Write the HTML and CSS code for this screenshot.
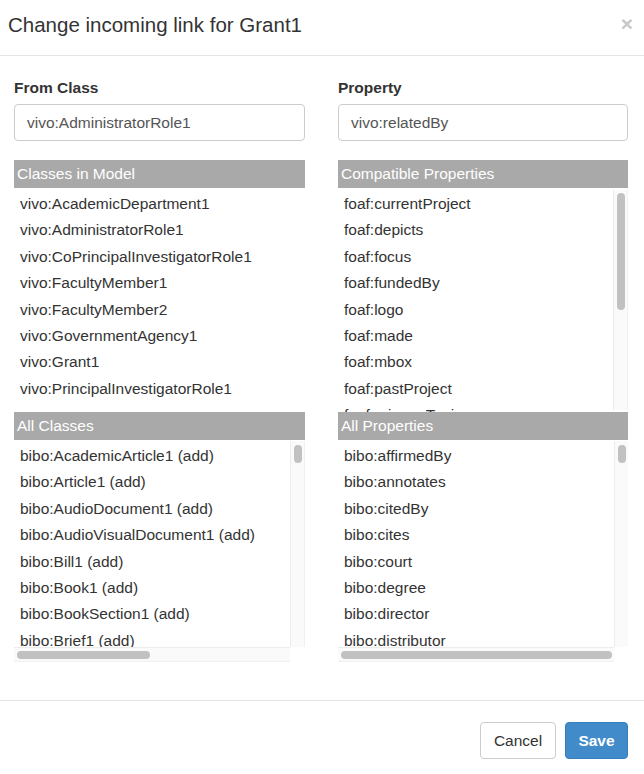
FILE: index.html
```html
<!DOCTYPE html>
<html>
<head>
<meta charset="utf-8">
<title>Change incoming link for Grant1</title>
<link rel="stylesheet" href="styles.css">
</head>
<body>
<div class="modal">
  <div class="modal-header">
    <h4 class="modal-title">Change incoming link for Grant1</h4>
    <button class="close" type="button">×</button>
  </div>
  <div class="modal-body">
    <div class="col">
      <label class="field-label">From Class</label>
      <div class="input">vivo:AdministratorRole1</div>
      <div class="list-head">Classes in Model</div>
      <div class="listbox listbox-plain">
        <ul class="items">
          <li>vivo:AcademicDepartment1</li>
          <li>vivo:AdministratorRole1</li>
          <li>vivo:CoPrincipalInvestigatorRole1</li>
          <li>vivo:FacultyMember1</li>
          <li>vivo:FacultyMember2</li>
          <li>vivo:GovernmentAgency1</li>
          <li>vivo:Grant1</li>
          <li>vivo:PrincipalInvestigatorRole1</li>
        </ul>
      </div>
      <div class="list-head">All Classes</div>
      <div class="listbox listbox-scroll">
        <ul class="items">
          <li>bibo:AcademicArticle1 (add)</li>
          <li>bibo:Article1 (add)</li>
          <li>bibo:AudioDocument1 (add)</li>
          <li>bibo:AudioVisualDocument1 (add)</li>
          <li>bibo:Bill1 (add)</li>
          <li>bibo:Book1 (add)</li>
          <li>bibo:BookSection1 (add)</li>
          <li>bibo:Brief1 (add)</li>
          <li>bibo:CaseBrief1 (add)</li>
        </ul>
        <div class="vtrack"><div class="vthumb vthumb-small"></div></div>
        <div class="htrack"><div class="hthumb hthumb-left"></div></div>
        <div class="corner"></div>
      </div>
    </div>
    <div class="col">
      <label class="field-label">Property</label>
      <div class="input">vivo:relatedBy</div>
      <div class="list-head">Compatible Properties</div>
      <div class="listbox listbox-vonly">
        <ul class="items">
          <li>foaf:currentProject</li>
          <li>foaf:depicts</li>
          <li>foaf:focus</li>
          <li>foaf:fundedBy</li>
          <li>foaf:logo</li>
          <li>foaf:made</li>
          <li>foaf:mbox</li>
          <li>foaf:pastProject</li>
          <li>foaf:primaryTopic</li>
          <li>foaf:publications</li>
        </ul>
        <div class="vtrack vtrack-tall"><div class="vthumb vthumb-large"></div></div>
      </div>
      <div class="list-head">All Properties</div>
      <div class="listbox listbox-scroll">
        <ul class="items">
          <li>bibo:affirmedBy</li>
          <li>bibo:annotates</li>
          <li>bibo:citedBy</li>
          <li>bibo:cites</li>
          <li>bibo:court</li>
          <li>bibo:degree</li>
          <li>bibo:director</li>
          <li>bibo:distributor</li>
          <li>bibo:editor</li>
        </ul>
        <div class="vtrack"><div class="vthumb vthumb-small"></div></div>
        <div class="htrack"><div class="hthumb hthumb-wide"></div></div>
        <div class="corner"></div>
      </div>
    </div>
  </div>
  <div class="modal-footer">
    <button class="btn btn-default" type="button">Cancel</button>
    <button class="btn btn-primary" type="button">Save</button>
  </div>
</div>
</body>
</html>
```

FILE: styles.css
```css
* { box-sizing: border-box; }

html, body {
  margin: 0;
  padding: 0;
  background: #ffffff;
}

body {
  font-family: "Liberation Sans", Arial, sans-serif;
  color: #333333;
  font-size: 15.5px;
}

.modal {
  width: 644px;
  height: 774px;
  display: flex;
  flex-direction: column;
}

.modal-header {
  height: 56px;
  border-bottom: 1px solid #e5e5e5;
  display: flex;
  align-items: center;
  justify-content: space-between;
  padding: 0 11px 5px 8px;
}

.modal-title {
  margin: 0;
  font-size: 20.5px;
  font-weight: normal;
  color: #333333;
  line-height: 24px;
}

.close {
  border: 0;
  background: transparent;
  padding: 0;
  margin: 0 0 3px 0;
  font-family: "Liberation Sans", Arial, sans-serif;
  font-size: 21px;
  font-weight: bold;
  line-height: 1;
  color: #c8c8c8;
}

.modal-body {
  display: grid;
  grid-template-columns: 291px 290px;
  column-gap: 33px;
  padding: 22px 16px 38px 14px;
}

.col {
  display: flex;
  flex-direction: column;
}

.field-label {
  display: block;
  font-weight: bold;
  font-size: 15.5px;
  line-height: 20px;
  color: #333333;
  margin-bottom: 6px;
}

.input {
  height: 37px;
  border: 1px solid #cccccc;
  border-radius: 4px;
  padding: 0 12px;
  display: flex;
  align-items: center;
  font-size: 15.5px;
  color: #555555;
  margin-bottom: 19px;
}

.list-head {
  height: 28px;
  background: #a9a9a9;
  color: #ffffff;
  font-size: 15.5px;
  line-height: 28px;
  padding-left: 3px;
}

.listbox {
  display: grid;
  overflow: hidden;
}

.listbox-plain {
  height: 224px;
  grid-template-columns: 1fr;
}

.listbox-vonly {
  height: 224px;
  grid-template-columns: 1fr 15px;
}

.listbox-scroll {
  height: 222px;
  grid-template-columns: 1fr 15px;
  grid-template-rows: 1fr 15px;
}

.items {
  list-style: none;
  margin: 0;
  padding: 3px 0 0 6px;
  overflow: hidden;
  white-space: nowrap;
  min-height: 0;
}

.items li {
  height: 26.4px;
  line-height: 26.4px;
  font-size: 15.5px;
  color: #333333;
}

.vtrack {
  background: #fafafa;
  border-left: 1px solid #ececec;
  border-right: 1px solid #f0f0f0;
  padding: 4px 0 0 3px;
  margin-top: 1px;
}

.vtrack-tall {
  margin: 2px 0;
  padding-top: 3px;
}

.vthumb {
  width: 8px;
  background: #c1c1c1;
  border-radius: 4px;
}

.vthumb-small { height: 18px; }
.vthumb-large { height: 117px; }

.htrack {
  background: #fafafa;
  border-top: 1px solid #ececec;
  border-bottom: 1px solid #f0f0f0;
  padding: 3px 2px 0 3px;
}

.hthumb {
  height: 8px;
  background: #c1c1c1;
  border-radius: 4px;
}

.hthumb-left { width: 133px; }
.hthumb-wide { width: 271px; }

.corner {
  background: #ffffff;
}

.modal-footer {
  margin-top: auto;
  border-top: 1px solid #e5e5e5;
  display: flex;
  justify-content: flex-end;
  align-items: flex-start;
  gap: 9px;
  padding: 21px 16px 15px 15px;
}

.btn {
  height: 37px;
  border-radius: 4px;
  font-family: "Liberation Sans", Arial, sans-serif;
  font-size: 15.5px;
  line-height: 35px;
  padding: 0;
  margin: 0;
  cursor: pointer;
}

.btn-default {
  background: #ffffff;
  border: 1px solid #cccccc;
  color: #333333;
  width: 76px;
}

.btn-primary {
  background: #428bca;
  border: 1px solid #357ebd;
  color: #ffffff;
  font-weight: bold;
  width: 63px;
}
```
